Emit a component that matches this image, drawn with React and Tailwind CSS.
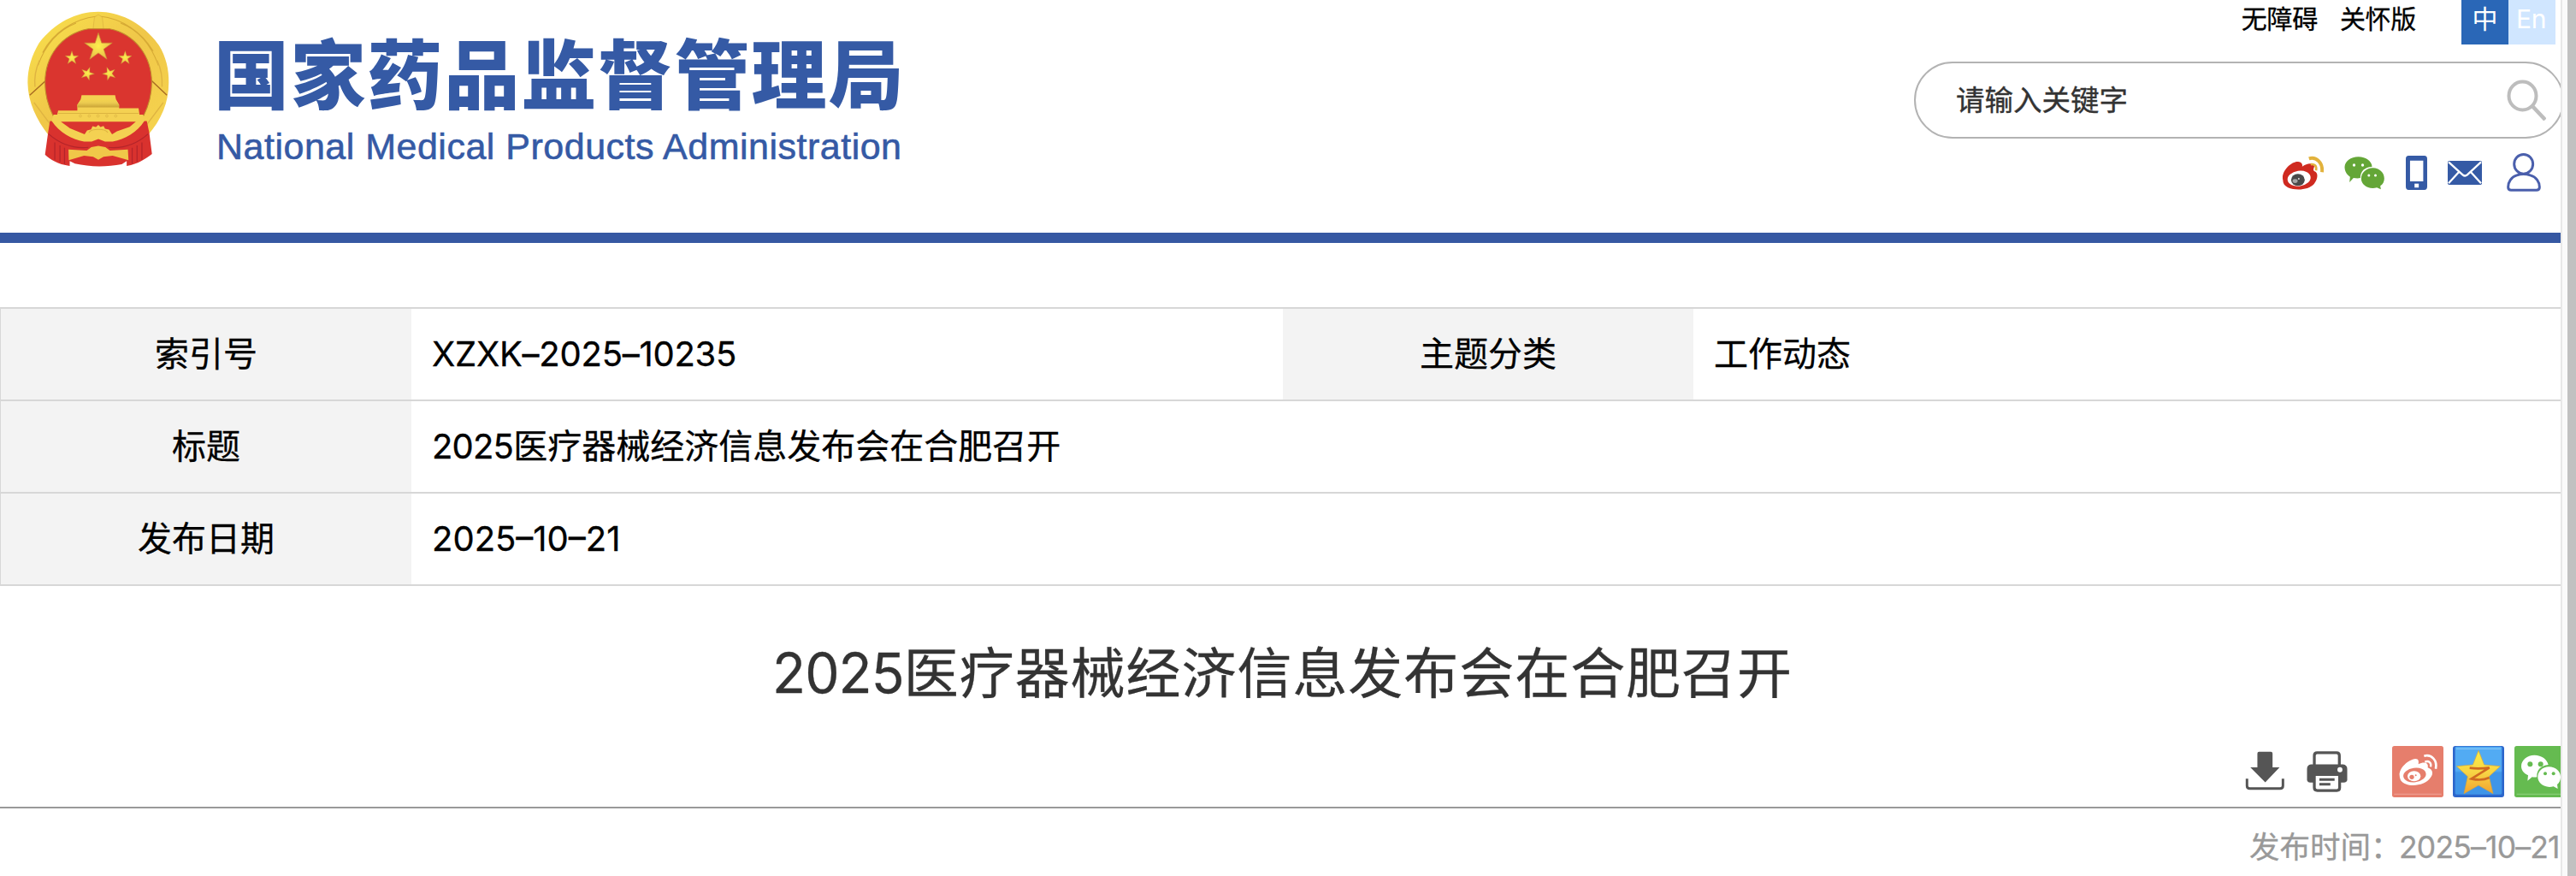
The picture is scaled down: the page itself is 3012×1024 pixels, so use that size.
const STAR = "M0,-1 L0.2245,-0.309 L0.951,-0.309 L0.363,0.118 L0.588,0.809 L0,0.382 L-0.588,0.809 L-0.363,0.118 L-0.951,-0.309 L-0.2245,-0.309 Z";

function Emblem() {
  return (
    <svg viewBox="90 40 466 545" preserveAspectRatio="none" className="ml-[32px] mt-[13px] h-[182px] w-[166px] shrink-0" aria-hidden="true">
      <defs>
        <linearGradient id="wreath" x1="0" y1="0" x2="1" y2="1">
          <stop offset="0" stopColor="#f9e24c" />
          <stop offset="0.5" stopColor="#f0c749" />
          <stop offset="1" stopColor="#f6d44e" />
        </linearGradient>
        <radialGradient id="star">
          <stop offset="0" stopColor="#fdf04d" />
          <stop offset="1" stopColor="#e9bd49" />
        </radialGradient>
        <linearGradient id="roof" x1="0" y1="0" x2="0" y2="1">
          <stop offset="0" stopColor="#f3d24e" />
          <stop offset="0.4" stopColor="#eccb50" />
          <stop offset="1" stopColor="#c9a336" />
        </linearGradient>
      </defs>
      <path d="M323 42 C390 42 460 78 508 140 L522 160 C545 200 555 245 554 290 C554 360 530 420 485 475 L160 475 C120 420 92 360 91 290 C91 240 104 195 128 152 C180 80 250 42 323 42Z" fill="url(#wreath)" />
      <path d="M140 185 C175 115 240 68 318 58 M328 58 C400 66 465 112 503 180 M125 230 C150 155 195 105 250 82 M520 230 C495 155 452 105 396 82" fill="none" stroke="#d6aa35" strokeWidth="3" />
      <path d="M115 305 C112 270 118 240 130 212 M532 305 C534 270 528 240 516 212 M112 360 L168 440 M536 360 L480 440" fill="none" stroke="#dfb441" strokeWidth="4" />
      <path d="M310 62 L323 52 L336 62 L340 102 L306 102Z" fill="#f1d04a" stroke="#dcb23e" strokeWidth="2" />
      <path d="M98 334 L152 282 M548 334 L496 282" stroke="#a96c22" strokeWidth="4" />
      <path d="M290 102 L360 102 C445 120 498 200 498 290 C498 335 488 370 472 405 L174 405 C158 370 148 335 148 290 C148 200 200 120 290 102Z" fill="#da352f" stroke="#c28a2d" strokeWidth="3" />
      <path d="M164 425 L482 425 L490 465 L499 540 C480 555 455 575 416 582 L416 565 L400 576 C350 586 295 586 246 574 L229 565 L229 582 C190 575 165 560 148 542 L158 465Z" fill="#d9322e" />
      <path d="M160 470 C200 508 240 522 290 517 M486 470 C446 508 406 522 356 517 M180 500 V560 M197 510 V568 M212 518 V575 M466 500 V560 M450 510 V568 M434 518 V575" fill="none" stroke="#b3242a" strokeWidth="3.500" />
      <path d="M268 334 H378 L381 350 L391 368 V380 H455 L458 402 H470 L474 425 C450 465 410 488 370 497 H345 L323 488 L301 497 H276 C235 488 195 465 170 425 L176 402 H188 L191 388 H254 V368 L265 350Z" fill="#f4d152" />
      <path d="M265 350 H381 L391 368 V377 H254 V368Z" fill="url(#roof)" />
      <path d="M200 427 H446 L426 445 L384 461 L368 471 L358 455 L345 452 L340 442 L330 446 L323 438 L315 446 L304 443 L299 454 L286 458 L278 471 L230 450Z" fill="#da352f" />
      <path d="M292 465 C300 450 346 450 354 465 M190 398 H456" fill="none" stroke="#dcb440" strokeWidth="3" />
      <g fill="none" stroke="#d8b041" strokeWidth="2">
        <circle cx="264" cy="407" r="4" /><circle cx="293" cy="407" r="4" /><circle cx="322" cy="407" r="4" /><circle cx="351" cy="407" r="4" /><circle cx="380" cy="407" r="4" />
      </g>
      <path d="M225 524 L285 528 L300 516 L323 512 L346 516 L361 528 L420 524 L422 562 L370 546 L340 550 L323 560 L306 550 L276 546 L226 562Z" fill="#f0c749" />
      <g fill="url(#star)" stroke="#c98a35" strokeWidth="0.04">
        <path d={STAR} transform="translate(323 167) scale(48 51)" />
        <path d={STAR} transform="translate(236 204) scale(23 25)" />
        <path d={STAR} transform="translate(411 204) scale(23 25)" />
        <path d={STAR} transform="translate(287 259) rotate(20) scale(23 24)" />
        <path d={STAR} transform="translate(359 259) rotate(-20) scale(23 24)" />
      </g>
    </svg>
  );
}

function Weibo() {
  return (
    <svg viewBox="204 64 148 120" className="h-10 w-[49px]">
      <path d="M208 150 C200 118 240 82 262 85 C274 87 278 93 276 102 C292 90 312 88 318 98 C321 104 312 112 318 118 C334 122 332 146 318 163 C300 184 255 188 226 176 C214 171 208 162 208 150Z" fill="#cf2a20" />
      <ellipse cx="265" cy="144" rx="41" ry="27" fill="#fff" transform="rotate(-8 265 144)" />
      <ellipse cx="261" cy="149" rx="24" ry="21" fill="#4a4a4a" />
      <ellipse cx="251" cy="153" rx="9" ry="7" fill="#a5a5a5" />
      <circle cx="264" cy="145" r="3" fill="#ddd" />
      <path d="M300 74 C325 66 350 88 346 122" fill="none" stroke="#e2b23c" strokeWidth="12" />
      <path d="M306 94 C320 92 328 100 325 116" fill="none" stroke="#e2b23c" strokeWidth="8" />
    </svg>
  );
}

function Wechat() {
  return (
    <svg viewBox="422 64 143 120" className="ml-6 h-10 w-12">
      <path d="M471 68 C498 68 519 84 519 103 C494 104 478 118 478 142 C470 144 462 143 454 142 L440 157 L442 138 C429 130 423 117 423 104 C424 84 444 68 471 68Z" fill="#64a637" />
      <path d="M522 107 C545 107 562 124 562 144 C562 155 557 164 548 170 L550 182 L536 176 C505 184 481 165 481 144 C481 124 499 107 522 107Z" fill="#64a637" />
      <g fill="#fff"><circle cx="456" cy="97" r="5" /><circle cx="486" cy="97" r="5" /><circle cx="508" cy="133" r="4.500" /><circle cx="531" cy="133" r="4.500" /></g>
    </svg>
  );
}

function Phone() {
  return (
    <svg viewBox="638 61 76 121" className="ml-6 h-10 w-[25px]">
      <path fillRule="evenodd" d="M648 61 H704 Q714 61 714 72 V171 Q714 182 704 182 H648 Q638 182 638 171 V72 Q638 61 648 61Z M653 78 V152 H700 V78Z" fill="#355aa5" />
      <rect x="669" y="160" width="15" height="14" fill="#fff" />
    </svg>
  );
}

function Mail() {
  return (
    <svg viewBox="785 84 121 84" className="ml-6 h-7 w-10">
      <rect x="785" y="84" width="121" height="84" rx="5" fill="#355aa5" />
      <path d="M788 88 L838 133 Q846 140 854 133 L903 88 M788 163 L824 124 M903 163 L867 124" fill="none" stroke="#fff" strokeWidth="7" />
    </svg>
  );
}

function User() {
  return (
    <svg viewBox="992 55 122 141" className="ml-[29px] h-[47px] w-10">
      <g fill="none" stroke="#4a5fac" strokeWidth="9">
        <ellipse cx="1052" cy="96" rx="33.500" ry="34.500" />
        <path d="M1028 136 C1008 142 997 160 997 178 Q997 189 1008 189 H1098 Q1109 189 1109 178 C1109 160 1098 142 1076 136 C1060 130 1044 130 1028 136Z" />
      </g>
    </svg>
  );
}

function Download() {
  return (
    <svg viewBox="105 113 138 140" className="h-[46px] w-[46px]">
      <path d="M154 115 H196 Q202 115 202 121 V171 H227 L176 224 L123 171 H148 V121 Q148 115 154 115Z" fill="#555" />
      <path d="M111 211 V236 Q111 246 121 246 H229 Q239 246 239 236 V211" fill="none" stroke="#555" strokeWidth="9" />
    </svg>
  );
}

function Printer() {
  return (
    <svg viewBox="321 113 145 146" className="ml-[26px] h-[48px] w-[48px]">
      <path d="M348 164 V129 Q348 119 358 119 H427 Q437 119 437 129 V164" fill="#fff" stroke="#555" strokeWidth="10" />
      <path d="M336 160 H450 Q465 162 465 176 V214 Q465 224 452 225 H334 Q322 224 322 214 V176 Q322 162 336 160Z" fill="#555" />
      <path d="M348 196 H438 V243 Q438 253 428 253 H359 Q348 253 348 243Z" fill="#fff" stroke="#555" strokeWidth="10" />
      <path d="M366 214 H420 M366 231 H405" stroke="#555" strokeWidth="9" />
      <circle cx="439" cy="179" r="9" fill="#fff" />
    </svg>
  );
}

function ShareWeibo() {
  return (
    <svg viewBox="621 96 180 180" className="ml-[52px] h-[60px] w-[60px]">
      <rect x="621" y="96" width="180" height="180" rx="8" fill="#e67e6c" />
      <path d="M628 265 H794" stroke="#ee9c8e" strokeWidth="4" />
      <path d="M647 199 C645 174 677 144 703 141 C714 141 715 150 713 160 C733 150 750 154 746 172 C764 178 767 194 755 208 C735 238 670 244 651 216 Q647 208 647 199Z" fill="#fff" />
      <ellipse cx="700" cy="198" rx="40" ry="25" fill="#e67e6c" transform="rotate(-8 700 198)" />
      <ellipse cx="698" cy="202" rx="23" ry="18" fill="#fff" />
      <circle cx="690" cy="205" r="8" fill="#e67e6c" />
      <circle cx="704" cy="199" r="3" fill="#e67e6c" />
      <path d="M733 131 C760 124 780 146 774 176" fill="none" stroke="#fff" strokeWidth="8" />
      <path d="M736 152 C750 146 760 156 756 169" fill="none" stroke="#fff" strokeWidth="7" />
    </svg>
  );
}

function ShareQzone() {
  return (
    <svg viewBox="834 96 180 180" className="ml-[11px] h-[60px] w-[60px]">
      <defs>
        <linearGradient id="sky" x1="0" y1="0" x2="0" y2="1">
          <stop offset="0.5" stopColor="#52abf3" />
          <stop offset="0.55" stopColor="#3f95e8" />
        </linearGradient>
        <linearGradient id="gold" x1="0" y1="0" x2="0" y2="1">
          <stop offset="0" stopColor="#fcee45" />
          <stop offset="0.5" stopColor="#f8d545" />
          <stop offset="1" stopColor="#f2a22f" />
        </linearGradient>
      </defs>
      <rect x="834" y="96" width="180" height="180" rx="9" fill="#2c66cb" />
      <rect x="842" y="98" width="164" height="168" rx="5" fill="url(#sky)" />
      <path d="M846 106 H1002" stroke="#83c6f8" strokeWidth="4" />
      <path d="M924 112 L944 162 L1000 167 L961 203 L975 263 L924 234 L873 263 L886 203 L847 167 L904 162Z" fill="url(#gold)" stroke="#d6a53a" strokeWidth="2" />
      <path d="M893 173 C915 176 935 176 962 172 L899 211 C920 216 945 215 962 207" fill="none" stroke="#cf6a21" strokeWidth="8" />
    </svg>
  );
}

function ShareWechat() {
  return (
    <svg viewBox="1050 96 162 180" className="ml-3 h-[60px] w-[54px]">
      <rect x="1050" y="96" width="180" height="180" rx="8" fill="#65bb50" />
      <path d="M1058 265 H1212" stroke="#86cd75" strokeWidth="4" />
      <path d="M1120 128 C1146 128 1165 143 1169 162 C1142 164 1127 182 1129 205 C1124 206 1118 206 1112 205 L1096 218 L1098 199 C1082 191 1074 180 1074 167 C1074 145 1095 128 1120 128Z" fill="#fff" />
      <path d="M1171 169 C1194 169 1212 184 1212 205 C1212 217 1207 226 1200 231 L1202 246 L1187 238 C1155 246 1132 226 1132 205 C1132 184 1149 169 1171 169Z" fill="#fff" />
      <g fill="#65bb50"><circle cx="1105" cy="160" r="9" /><circle cx="1142" cy="160" r="9" /><circle cx="1158" cy="193" r="6" /><circle cx="1187" cy="193" r="6" /></g>
    </svg>
  );
}

function SearchIcon() {
  return (
    <svg viewBox="0 0 46 48" className="mr-[19px] h-12 w-[46px]" fill="none" stroke="#bdbdbd" strokeWidth="4">
      <ellipse cx="18.500" cy="19" rx="16" ry="16.500" />
      <path d="M30 31 L45 47" strokeWidth="4.500" />
    </svg>
  );
}

function Label({ children }) {
  return <div className="flex w-[480px] shrink-0 items-center justify-center bg-[#f3f3f3]">{children}</div>;
}

function Value({ children, className = "flex-1" }) {
  return <div className={"flex items-center pl-6 " + className}>{children}</div>;
}

function Row({ children }) {
  return <div className="flex h-[108px] border-b-2 border-[#d7d7d7]">{children}</div>;
}

export default function App() {
  return (
    <div className="flex h-[1024px] w-[3012px] overflow-hidden bg-white font-['Inter','Noto_Sans_CJK_SC',sans-serif] text-black">
      <main className="w-[2994px] shrink-0 overflow-hidden">
        <header className="flex h-[284px] justify-between border-b-[12px] border-[#3658a2]">
          <div className="flex">
            <Emblem />
            <div className="ml-[52px] mt-[24px] w-[840px] whitespace-nowrap text-[#355aa5]">
              <div className="h-[119px] font-['Noto_Sans_CJK_SC',sans-serif] text-[88px] font-black leading-[115px] tracking-[1.8px]">国家药品监督管理局</div>
              <div className="h-[56px] pl-[3px] font-['Liberation_Sans',sans-serif] text-[43px] leading-[56px] tracking-[0.5px] [-webkit-text-stroke:0.6px_#355aa5]">National Medical Products Administration</div>
            </div>
          </div>
          <div className="flex w-[756px] flex-col">
            <div className="flex h-[52px] justify-end pr-[6px] text-[30px]">
              <span className="mt-px leading-[42px] tracking-[-0.3px] [-webkit-text-stroke:0.3px_black]">无障碍</span>
              <span className="ml-[26px] mt-px leading-[42px] tracking-[-0.3px] [-webkit-text-stroke:0.3px_black]">关怀版</span>
              <span className="ml-[53px] w-[55px] bg-[#2a67b7] text-center leading-[44px] text-white">中</span>
              <span className="w-[55px] bg-[#d0e6ff] pr-[2px] text-center text-[30px] leading-[44px] tracking-[-0.5px] text-white">En</span>
            </div>
            <div className="mt-5 flex h-[90px] w-[760px] items-center justify-between rounded-[48px] border-2 border-[#b3b3b3] pl-[47px]">
              <span className="text-[33.5px] leading-[40px] text-[#333] [-webkit-text-stroke:0.4px_#333]">请输入关键字</span>
              <SearchIcon />
            </div>
            <div className="mt-[16px] flex h-[47px] items-center justify-end pr-[23px]">
              <Weibo />
              <Wechat />
              <Phone />
              <Mail />
              <User />
            </div>
          </div>
        </header>

        <section className="mt-[75px] border-l border-t-2 border-[#d7d7d7] text-[40px] leading-[56px] [-webkit-text-stroke:0.3px_black]">
          <Row>
            <Label>索引号</Label>
            <Value className="w-[1019px] tracking-[-0.25px]">XZXK–2025–10235</Value>
            <Label>主题分类</Label>
            <Value>工作动态</Value>
          </Row>
          <Row>
            <Label>标题</Label>
            <Value><span className="tracking-[-0.8px]">2025</span><span>医疗器械经济信息发布会在合肥召开</span></Value>
          </Row>
          <Row>
            <Label>发布日期</Label>
            <Value>2025–10–21</Value>
          </Row>
        </section>

        <h1 className="mt-[57px] h-[89px] pl-[5px] text-center text-[64px] leading-[90px] text-[#333] [-webkit-text-stroke:0.3px_#333]">
          <span className="tracking-[-0.9px]">2025</span><span className="tracking-[0.95px]">医疗器械经济信息发布会在合肥召开</span>
        </h1>

        <div className="mt-[41px] flex h-[73px] items-start justify-end border-b-2 border-[#999]">
          <div className="mt-[6px] flex"><Download /><Printer /></div>
          <ShareWeibo />
          <ShareQzone />
          <ShareWechat />
        </div>
        <div className="mt-[21px] flex h-[50px] whitespace-nowrap pl-[2630px] text-[35.5px] leading-[50px] text-[#999] [-webkit-text-stroke:0.3px_#999]">
          <span className="w-[175px] shrink-0">发布时间：</span>
          <span className="tracking-[-0.8px]">2025–10–21</span>
        </div>
      </main>
      <div className="w-2 shrink-0 border-l-2 border-[#e8e8e8] bg-[#fafafa]" />
      <div className="w-[10px] shrink-0 bg-[#c1c1c1]" />
    </div>
  );
}
